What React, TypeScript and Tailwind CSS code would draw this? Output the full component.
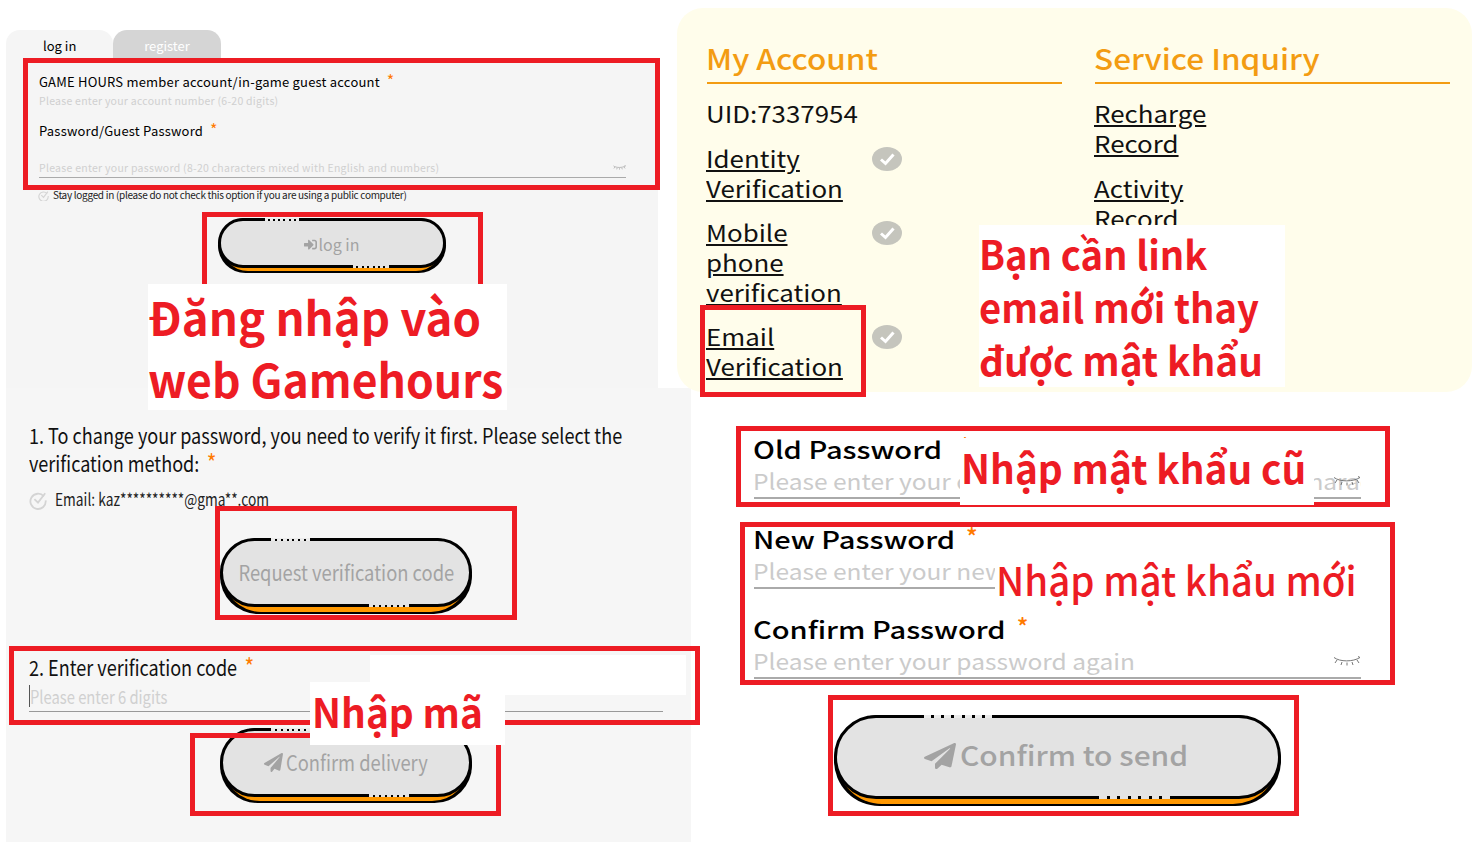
import { ReactNode } from 'react';
import { FaPaperPlane, FaSignInAlt } from 'react-icons/fa';

const Star = ({ className = '' }: { className?: string }) => (
  <span className={`text-[#ff7a00] ${className}`}>*</span>
);

// squashed closed eye from the original site
const ClosedEye = ({ className = '' }: { className?: string }) => (
  <svg viewBox="0 0 28 10" className={className} fill="none" stroke="#777" strokeWidth="1">
    <path d="M1 1.5C7 6 20 6 27 1.5" />
    <path d="M4 4L2 7M9 6L8 9M14 6.5V9.5M19 6L20 9M24 4L26 7M27 1.5L25 .5" />
  </svg>
);

const OutlineCheck = ({ className = '' }: { className?: string }) => (
  <svg viewBox="0 0 20 20" className={className} fill="none" stroke="#d4d4d4" strokeWidth="2">
    <path d="M16.5 6.5A8.5 8.5 0 1 0 18.5 11" />
    <path d="M6 9.5L10 13.5L18 3" />
  </svg>
);

const VerifiedBadge = () => (
  <svg viewBox="0 0 30 24" className="w-[30px] h-6 mt-1 shrink-0">
    <ellipse cx="15" cy="12" rx="15" ry="12" fill="#c5c5bd" />
    <path d="M9 12.5L13.5 16.5L21.5 7.5" fill="none" stroke="#fff" strokeWidth="3" />
  </svg>
);

function Dots({ className, big }: { className: string; big?: boolean }) {
  return (
    <span className={`absolute h-[3px] flex items-center justify-evenly ${className}`}>
      {[0, 1, 2, 3, 4, 5].map((i) => (
        <span key={i} className={big ? 'w-[3px] h-[3px] bg-black' : 'w-[2px] h-[2px] bg-black'} />
      ))}
    </span>
  );
}

function PillButton({ className, inner, big, children }: { className: string; inner: string; big?: boolean; children: ReactNode }) {
  return (
    <div className={`absolute rounded-full bg-black ${className}`}>
      <div className="absolute inset-x-[3px] bottom-[2px] h-1/2 rounded-b-full bg-[#ff9800]" />
      <div className={`absolute inset-x-0 top-0 ${inner} rounded-full border-[3px] border-black bg-[#e3e3e3] flex items-center justify-center text-[#a3a3a3]`}>
        {children}
        <Dots big={big} className="-top-[3px] left-[19.7%] w-[15.5%] bg-[#ececec]" />
        <Dots big={big} className="-bottom-[3px] left-[59.5%] w-[16%] bg-[#e3e3e3]" />
      </div>
    </div>
  );
}

const Label = ({ children, className }: { children: ReactNode; className: string }) => (
  <div className={`absolute bg-white text-[#ed1c24] leading-none whitespace-nowrap ${className}`}>{children}</div>
);

const RedBox = ({ className }: { className: string }) => (
  <div className={`absolute border-[5px] border-[#ed1c24] ${className}`} />
);

function LinkText({ lines }: { lines: string[] }) {
  return (
    <a className="block w-[135px] -ml-px text-[23px] leading-[30px] text-[#111]">
      {lines.map((l) => (
        <span key={l} className="block origin-left scale-x-[1.125] underline underline-offset-2 whitespace-nowrap">
          {l}
        </span>
      ))}
    </a>
  );
}

function WideField({ label, placeholder, eye, starClass }: { label: string; placeholder: string; eye?: boolean; starClass: string }) {
  return (
    <div className="h-[90px]">
      <div className="h-[30px] -ml-px flex items-center gap-3 text-[24px] font-medium text-black whitespace-nowrap">
        <span className="origin-left scale-x-[1.21]">{label}</span>
        <Star className={`text-[24px] leading-none -translate-y-[3px] ${starClass}`} />
      </div>
      <div className="relative h-[35px] flex items-center border-b-2 border-[#aaa] overflow-hidden">
        <span className="-ml-px origin-left scale-x-[1.114] text-[22px] text-[#cbcbcb] whitespace-pre">{placeholder}</span>
        {eye && <ClosedEye className="absolute right-0 top-[12px] w-7 h-[10px]" />}
      </div>
    </div>
  );
}

export default function App() {
  return (
    <div className="relative w-[1482px] h-[842px] overflow-hidden bg-white font-['Noto_Sans_CJK_SC','Noto_Sans',sans-serif]">
      {/* login screenshot */}
      <div className="absolute left-[6px] top-[30px] w-[652px] h-[358px] flex flex-col">
        <div className="flex h-7 shrink-0 text-[13px] leading-[31px]">
          <div className="w-[107px] rounded-t-[14px] bg-[#f5f5f5] pl-[37px] text-black">log in</div>
          <div className="w-[108px] rounded-t-[14px] bg-[#d5d5d5] text-center text-white">register</div>
        </div>
        <div className="flex-1 bg-[#f5f5f5] pl-[33px] pr-[32px] pt-[14px]">
          <div className="text-[13px] leading-5 text-black flex gap-[7px] tracking-[0.21px]">
            GAME HOURS member account/in-game guest account <Star className="text-[16px] leading-none" />
          </div>
          <div className="text-[10.5px] leading-[18px] text-[#d0d0d0] tracking-[0.26px]">Please enter your account number (6-20 digits)</div>
          <div className="mt-[11px] text-[13px] leading-5 text-black flex gap-[7px] tracking-[0.21px]">
            Password/Guest Password <Star className="text-[16px] leading-none" />
          </div>
          <div className="mt-[7px] h-[30px] pt-[10px] border-b border-[#aaa] flex items-center justify-between text-[10.5px] text-[#d0d0d0] tracking-[0.27px]">
            Please enter your password (8-20 characters mixed with English and numbers)
            <ClosedEye className="w-[13px] h-[5px]" />
          </div>
          <div className="mt-[11px] -ml-px flex items-center gap-[4px] text-[10px] leading-3 text-[#222] whitespace-nowrap">
            <OutlineCheck className="w-[11px] h-[11px] shrink-0" />
            <span className="tracking-[-0.3px]">Stay logged in (please do not check this option if you are using a public computer)</span>
          </div>
        </div>
      </div>

      {/* change password screenshot */}
      <div className="absolute left-[6px] top-[388px] w-[685px] h-[454px] bg-[#f6f6f6] pl-[23px] pr-[28px] pt-[33px]">
        <div className="text-[21px] leading-[28px] text-[#111] whitespace-nowrap">
          <div className="origin-left scale-x-[0.86]">1. To change your password, you need to verify it first. Please select the</div>
          <div className="origin-left scale-x-[0.86]">
            verification method: <Star className="ml-1 text-[24px] leading-none" />
          </div>
        </div>
        <div className="mt-[10px] flex items-center gap-2 text-[17px] leading-6 text-[#222] whitespace-nowrap">
          <OutlineCheck className="w-[18px] h-[21px] shrink-0" />
          <span className="origin-left scale-x-[0.81]">Email: kaz**********@gma**.com</span>
        </div>
        <div className="mt-[142px] text-[21px] leading-7 text-[#111] whitespace-nowrap">
          <div className="origin-left scale-x-[0.86]">
            2. Enter verification code <Star className="ml-1 text-[24px] leading-none" />
          </div>
        </div>
        <div className="mt-[2px] h-[29px] pb-[2px] border-b border-[#999] flex items-center text-[#d0d0d0] text-[18px]">
          <span className="w-px h-[22px] bg-[#555]" />
          <span className="origin-left scale-x-[0.82] whitespace-nowrap">Please enter 6 digits</span>
        </div>
      </div>

      {/* my account screenshot */}
      <div className="absolute left-[677px] top-[8px] w-[795px] h-[384px] rounded-[26px] bg-[#fffdeb] overflow-hidden pl-[30px] pr-[22px] pt-[30px] grid grid-cols-2 gap-x-[33px] content-start">
        <div>
          <h2 className="h-[46px] border-b-2 border-[#f39c12] text-[28px] font-medium leading-[40px] text-[#f39c12] whitespace-nowrap">
            <span className="block -ml-px origin-left scale-x-[1.125]">My Account</span>
          </h2>
          <div className="mt-[14px] text-[23px] leading-[30px] text-[#111]">
            <span className="block -ml-px origin-left scale-x-[1.125]">UID:7337954</span>
          </div>
          <div className="mt-[15px] flex flex-col gap-[14px]">
            <div className="flex gap-[31px]">
              <LinkText lines={['Identity', 'Verification']} />
              <VerifiedBadge />
            </div>
            <div className="flex gap-[31px]">
              <LinkText lines={['Mobile', 'phone', 'verification']} />
              <VerifiedBadge />
            </div>
            <div className="flex gap-[31px]">
              <LinkText lines={['Email', 'Verification']} />
              <VerifiedBadge />
            </div>
          </div>
        </div>
        <div>
          <h2 className="h-[46px] border-b-2 border-[#f39c12] text-[28px] font-medium leading-[40px] text-[#f39c12] whitespace-nowrap">
            <span className="block -ml-px origin-left scale-x-[1.125]">Service Inquiry</span>
          </h2>
          <div className="mt-[14px] flex flex-col gap-[15px]">
            <LinkText lines={['Recharge', 'Record']} />
            <LinkText lines={['Activity', 'Record']} />
            <div className="h-[128px]" />
            <LinkText lines={['History']} />
          </div>
        </div>
      </div>

      {/* new password form */}
      <div className="absolute left-[754px] top-[434px] w-[607px] flex flex-col">
        <WideField label="Old Password" starClass="ml-[38px]" placeholder="Please enter your original password here (8 - 20 characters mixed)" eye />
        <WideField label="New Password" starClass="ml-[34px]" placeholder="Please enter your new password (8-20 characters)" />
        <WideField label="Confirm Password" starClass="ml-[43px]" placeholder="Please enter your password again" eye />
      </div>

      <PillButton className="left-[218px] top-[218px] w-[228px] h-[55px]" inner="h-[50px] pt-[2px]">
        <FaSignInAlt className="w-[13px] h-[13px] mr-[1px]" />
        <span className="text-[16px]">log in</span>
      </PillButton>
      <PillButton className="left-[220px] top-[538px] w-[252px] h-[76px]" inner="h-[69px] pt-px">
        <span className="text-[21px] scale-x-[0.875] whitespace-nowrap">Request verification code</span>
      </PillButton>
      <PillButton className="left-[220px] top-[728px] w-[252px] h-[75px]" inner="h-[69px]">
        <FaPaperPlane className="w-[19px] h-[19px] mr-[3px]" />
        <span className="text-[21px] w-[142px] whitespace-nowrap origin-left scale-x-[0.873]">Confirm delivery</span>
      </PillButton>
      <PillButton big className="left-[834px] top-[715px] w-[447px] h-[91px]" inner="h-[84px] pb-[3px]">
        <FaPaperPlane preserveAspectRatio="none" className="w-[32px] h-[26px] mr-[4px]" />
        <span className="text-[27px] font-medium w-[231px] whitespace-nowrap origin-left scale-x-[1.11]">Confirm to send</span>
      </PillButton>

      {/* annotations */}
      <RedBox className="left-[23px] top-[58px] w-[637px] h-[132px]" />
      <RedBox className="left-[202px] top-[212px] w-[281px] h-[90px]" />
      <RedBox className="left-[215px] top-[506px] w-[302px] h-[114px]" />
      <div className="absolute left-[370px] top-[655px] w-[316px] h-[40px] bg-white" />
      <RedBox className="left-[9px] top-[646px] w-[691px] h-[79px]" />
      <RedBox className="left-[190px] top-[733px] w-[311px] h-[83px]" />
      <RedBox className="left-[700px] top-[305px] w-[166px] h-[92px]" />
      <RedBox className="left-[736px] top-[426px] w-[654px] h-[81px]" />
      <RedBox className="left-[740px] top-[522px] w-[655px] h-[163px]" />
      <RedBox className="left-[828px] top-[695px] w-[471px] h-[121px]" />

      <Label className="left-[148px] top-[284px] w-[359px] h-[126px] pt-px text-[46px] font-bold !leading-[62px]">
        <span className="block origin-left scale-x-[0.99]">Đăng nhập vào</span>
        <span className="block origin-left scale-x-[0.967]">web Gamehours</span>
      </Label>
      <Label className="left-[979px] top-[225px] w-[306px] h-[162px] pt-[2px] text-[40px] font-bold !leading-[53px]">
        <span className="block origin-left scale-x-[0.955]">Bạn cần link</span>
        <span className="block origin-left scale-x-[0.955]">email mới thay</span>
        <span className="block origin-left scale-x-[0.97]">được mật khẩu</span>
      </Label>
      <Label className="left-[960px] top-[438px] w-[354px] h-[67px] pl-px pt-[9px] text-[40px] font-bold">
        <span className="block origin-left scale-x-[0.97]">Nhập mật khẩu cũ</span>
      </Label>
      <Label className="left-[995px] top-[558px] w-[367px] h-[46px] pl-px pt-px text-[40px] font-medium">
        <span className="block origin-left scale-x-[0.962]">Nhập mật khẩu mới</span>
      </Label>
      <Label className="left-[310px] top-[682px] w-[195px] h-[63px] pl-[2px] pt-[9px] text-[40px] font-bold">
        <span className="block origin-left scale-x-[0.97]">Nhập mã</span>
      </Label>
    </div>
  );
}
